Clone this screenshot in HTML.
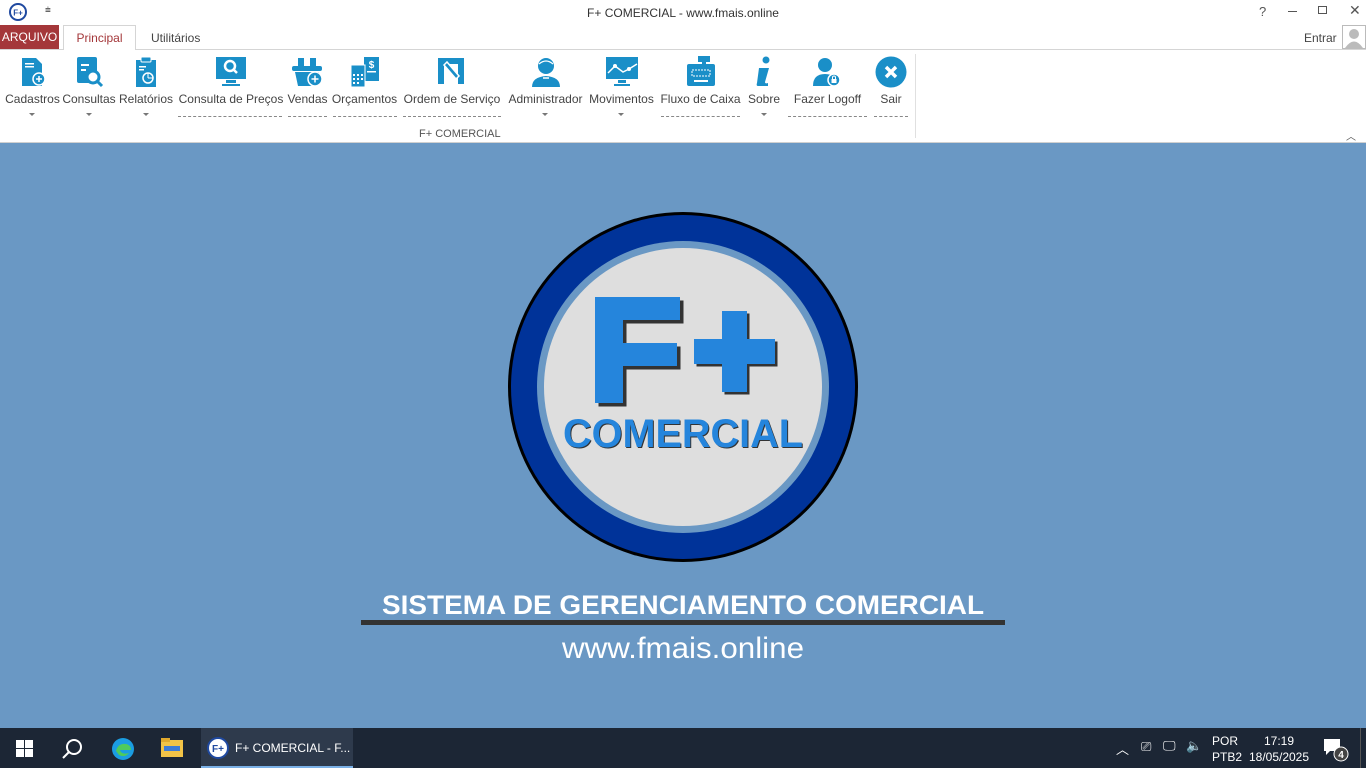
<!DOCTYPE html>
<html><head><meta charset="utf-8"><style>
*{margin:0;padding:0;box-sizing:border-box}
body{width:1366px;height:768px;overflow:hidden;font-family:"Liberation Sans",sans-serif;background:#6a98c4;position:relative;font-size:12px;color:#444}
.abs{position:absolute}
#top{left:0;top:0;width:1366px;height:143px;background:#fff;border-bottom:1px solid #d0d0d0}
.btn{position:absolute;top:56px;text-align:center;font-size:12px;color:#444;white-space:nowrap}
.btn .lbl{position:absolute;top:36px;left:-4px;right:-4px}
.dash{position:absolute;top:116px;height:1px;border-top:1px dashed #888}
.arr{position:absolute;top:113px;width:0;height:0;border-left:3px solid transparent;border-right:3px solid transparent;border-top:3px solid #777}
#task{left:0;top:728px;width:1366px;height:40px;background:#1c2635}
</style></head><body>
<div id="top" class="abs">
  <svg class="abs" style="left:9px;top:3px" width="18" height="18"><circle cx="9" cy="9" r="8" fill="#fff" stroke="#1f49a0" stroke-width="2"/><text x="9" y="12.5" font-size="8" font-weight="bold" fill="#1f49a0" text-anchor="middle" font-family="Liberation Sans">F+</text></svg>
  <div class="abs" style="left:45px;top:5px;font-size:10px;color:#666">⩧</div>
  <div class="abs" style="left:0;top:6px;width:1366px;text-align:center;font-size:12px;color:#333">F+ COMERCIAL - www.fmais.online</div>
  <div class="abs" style="left:1259px;top:4px;font-size:13px;color:#555">?</div>
  <div class="abs" style="left:1288px;top:11px;width:9px;height:1px;background:#555"></div>
  <div class="abs" style="left:1318px;top:6px;width:9px;height:8px;border:1px solid #555"></div>
  <div class="abs" style="left:1349px;top:2px;font-size:14px;color:#555">✕</div>
  <div class="abs" style="left:0;top:49px;width:1366px;height:1px;background:#d5d5d5"></div>
  <div class="abs" style="left:0;top:25px;width:59px;height:24px;background:#a4373a;color:#fff;font-size:12px;line-height:24px;text-align:center">ARQUIVO</div>
  <div class="abs" style="left:63px;top:25px;width:73px;height:25px;background:#fff;border:1px solid #d5d5d5;border-bottom:none;color:#a4373a;text-align:center;line-height:24px">Principal</div>
  <div class="abs" style="left:151px;top:31px;color:#444">Utilitários</div>
  <div class="abs" style="left:1304px;top:31px;color:#444">Entrar</div>
  <svg class="abs" style="left:1342px;top:25px" width="24" height="24"><rect width="24" height="24" fill="#bbb"/><rect x="1" y="1" width="22" height="22" fill="#fff"/><circle cx="12" cy="9" r="5" fill="#bbb"/><path d="M3 23 Q12 10 21 23Z" fill="#bbb"/></svg>

  <div class="btn" style="left:6px;width:53px"><svg width="30" height="32" viewBox="0 0 30 32"><path d="M4 2h14l6 6v22H4z" fill="#1a8fc8"/><rect x="7" y="7" width="9" height="1.5" fill="#fff"/><rect x="7" y="10" width="9" height="1.5" fill="#fff"/><circle cx="21" cy="23" r="6" fill="#1a8fc8" stroke="#fff" stroke-width="1.5"/><path d="M21 20v6M18 23h6" stroke="#fff" stroke-width="1.5"/></svg><div class="lbl">Cadastros</div></div>
  <div class="btn" style="left:62px;width:54px"><svg width="32" height="32"><rect x="4" y="1" width="20" height="26" rx="2" fill="#1a8fc8"/><rect x="8" y="8" width="8" height="2" fill="#fff"/><rect x="8" y="13" width="5" height="2" fill="#fff"/><circle cx="20" cy="21" r="6" fill="#fff" stroke="#1a8fc8" stroke-width="3"/><path d="M24 25l5 5" stroke="#1a8fc8" stroke-width="3"/></svg><div class="lbl">Consultas</div></div>
  <div class="btn" style="left:119px;width:54px"><svg width="30" height="32"><rect x="5" y="4" width="20" height="27" fill="#1a8fc8"/><rect x="10" y="1" width="10" height="5" rx="1" fill="#1a8fc8" stroke="#fff"/><rect x="8" y="10" width="7" height="1.5" fill="#fff"/><rect x="8" y="13" width="5" height="1.5" fill="#fff"/><circle cx="17" cy="22" r="5" fill="none" stroke="#fff" stroke-width="1.5"/><path d="M17 22h5M17 22v-5" stroke="#fff"/></svg><div class="lbl">Relatórios</div></div>
  <div class="btn" style="left:179px;width:104px"><svg width="34" height="32"><rect x="2" y="1" width="30" height="22" fill="#1a8fc8"/><circle cx="16" cy="10" r="5" fill="none" stroke="#fff" stroke-width="2.5"/><path d="M19 13l4 4" stroke="#fff" stroke-width="2.5"/><rect x="12" y="24" width="10" height="3" fill="#1a8fc8"/><rect x="8" y="28" width="18" height="2" fill="#1a8fc8"/></svg><div class="lbl">Consulta de Preços</div></div>
  <div class="btn" style="left:287px;width:41px"><svg width="36" height="32"><path d="M8 2h6v8H8zM20 2h6v8h-6z" fill="#1a8fc8"/><rect x="2" y="10" width="30" height="5" rx="2" fill="#1a8fc8"/><path d="M5 16h24l-3 14H8z" fill="#1a8fc8"/><circle cx="25" cy="23" r="7" fill="#1a8fc8" stroke="#fff" stroke-width="1.5"/><path d="M25 19.5v7M21.5 23h7" stroke="#fff" stroke-width="1.5"/></svg><div class="lbl">Vendas</div></div>
  <div class="btn" style="left:331px;width:67px"><svg width="34" height="32"><rect x="16" y="1" width="15" height="24" fill="#1a8fc8"/><text x="23.5" y="12" font-size="10" fill="#fff" text-anchor="middle" font-weight="bold" font-family="Liberation Sans">$</text><rect x="19" y="15" width="9" height="1.5" fill="#fff"/><rect x="3" y="9" width="14" height="22" fill="#1a8fc8" stroke="#fff"/><g fill="#fff"><rect x="5" y="18" width="2" height="2"/><rect x="9" y="18" width="2" height="2"/><rect x="13" y="18" width="2" height="2"/><rect x="5" y="22" width="2" height="2"/><rect x="9" y="22" width="2" height="2"/><rect x="13" y="22" width="2" height="2"/><rect x="5" y="26" width="2" height="2"/><rect x="9" y="26" width="2" height="2"/></g></svg><div class="lbl">Orçamentos</div></div>
  <div class="btn" style="left:403px;width:98px"><svg width="34" height="32"><path d="M3 2h26v26h-6V8H9v20H3z" fill="#1a8fc8"/><path d="M12 6l12 14-3 3L9 9z" fill="#1a8fc8" stroke="#fff" stroke-width="1.5"/></svg><div class="lbl">Ordem de Serviço</div></div>
  <div class="btn" style="left:506px;width:79px"><svg width="32" height="32"><circle cx="16" cy="10" r="8" fill="#1a8fc8"/><path d="M9 8q7-6 14 0" stroke="#fff" stroke-width="1.2" fill="none"/><path d="M2 31q0-10 14-11 14 1 14 11z" fill="#1a8fc8"/><path d="M13 22h6" stroke="#fff" stroke-width="1.5"/></svg><div class="lbl">Administrador</div></div>
  <div class="btn" style="left:587px;width:69px"><svg width="34" height="32"><rect x="1" y="1" width="32" height="22" fill="#1a8fc8"/><path d="M3 17l7-7 8 6 6-3 8-5" stroke="#fff" stroke-width="1.5" fill="none"/><circle cx="10" cy="10" r="2" fill="#fff"/><circle cx="24" cy="13" r="2" fill="#fff"/><rect x="13" y="24" width="8" height="3" fill="#1a8fc8"/><rect x="9" y="28" width="16" height="2" fill="#1a8fc8"/></svg><div class="lbl">Movimentos</div></div>
  <div class="btn" style="left:660px;width:81px"><svg width="34" height="32"><rect x="14" y="0" width="12" height="6" fill="#1a8fc8"/><rect x="18" y="6" width="4" height="4" fill="#1a8fc8"/><rect x="3" y="8" width="28" height="22" rx="2" fill="#1a8fc8"/><g fill="#fff"><rect x="8" y="14" width="18" height="6" fill="none" stroke="#fff" stroke-dasharray="2 1"/><rect x="10" y="24" width="14" height="2"/></g></svg><div class="lbl">Fluxo de Caixa</div></div>
  <div class="btn" style="left:747px;width:34px"><svg width="24" height="32"><circle cx="14" cy="4" r="3.5" fill="#1a8fc8"/><path d="M7 12h10l-4 14q0 2 3 1v3H6q-2 0 -1-3z" fill="#1a8fc8"/></svg><div class="lbl">Sobre</div></div>
  <div class="btn" style="left:788px;width:79px"><svg width="32" height="32"><circle cx="13" cy="9" r="7" fill="#1a8fc8"/><path d="M1 30q0-12 12-12 12 0 12 12z" fill="#1a8fc8"/><circle cx="22" cy="24" r="6" fill="#1a8fc8" stroke="#fff" stroke-width="1.5"/><rect x="19.5" y="23" width="5" height="4" fill="#fff"/><path d="M20.5 23v-1.5a1.5 1.5 0 0 1 3 0V23" stroke="#fff" fill="none"/></svg><div class="lbl">Fazer Logoff</div></div>
  <div class="btn" style="left:874px;width:34px"><svg width="34" height="32"><circle cx="17" cy="16" r="15.5" fill="#1a8fc8"/><path d="M12 11l10 10M22 11l-10 10" stroke="#fff" stroke-width="3.5"/></svg><div class="lbl">Sair</div></div>

  <div class="arr" style="left:29px"></div><div class="arr" style="left:86px"></div><div class="arr" style="left:143px"></div><div class="arr" style="left:542px"></div><div class="arr" style="left:618px"></div><div class="arr" style="left:761px"></div>
  <div class="dash" style="left:178px;width:104px"></div>
  <div class="dash" style="left:288px;width:39px"></div>
  <div class="dash" style="left:333px;width:64px"></div>
  <div class="dash" style="left:403px;width:98px"></div>
  <div class="dash" style="left:661px;width:79px"></div>
  <div class="dash" style="left:788px;width:79px"></div>
  <div class="dash" style="left:874px;width:34px"></div>
  <div class="abs" style="left:419px;top:128px;font-size:11px;color:#555">F+ COMERCIAL</div>
  <div class="abs" style="left:915px;top:54px;width:1px;height:84px;background:#e0e0e0"></div>
  <div class="abs" style="left:1346px;top:128px;font-size:10px;color:#555">︿</div>
</div>

<svg class="abs" style="left:506px;top:211px" width="354" height="354" viewBox="0 0 354 354">
  <circle cx="177" cy="176" r="175" fill="#000"/>
  <circle cx="177" cy="176" r="172" fill="#003399"/>
  <circle cx="177" cy="176" r="146" fill="#6a98c4"/>
  <circle cx="177" cy="176" r="139" fill="#dedede"/>
  <path d="M91 88h85v23h-57v23h54v23h-54v37h-28z" fill="#333" transform="translate(1.5,1.5)"/>
  <path d="M89 86h85v23h-57v23h54v23h-54v37h-28z" fill="#2585dc"/>
  <path d="M217 101h25v28h28v25h-28v28h-25v-28h-28v-25h28z" fill="#333" transform="translate(1.5,1.5)"/>
  <path d="M216 100h25v28h28v25h-28v28h-25v-28h-28v-25h28z" fill="#2585dc"/>
  <text x="178" y="237" font-family="Liberation Sans" font-weight="bold" font-size="40" fill="#333" text-anchor="middle" textLength="240" lengthAdjust="spacingAndGlyphs">COMERCIAL</text>
  <text x="177" y="236" font-family="Liberation Sans" font-weight="bold" font-size="40" fill="#2585dc" text-anchor="middle" textLength="240" lengthAdjust="spacingAndGlyphs">COMERCIAL</text>
</svg>
<svg class="abs" style="left:361px;top:585px" width="644" height="80">
  <text x="322" y="29" font-family="Liberation Sans" font-weight="bold" font-size="27" fill="#fff" text-anchor="middle" textLength="602" lengthAdjust="spacingAndGlyphs">SISTEMA DE GERENCIAMENTO COMERCIAL</text>
  <rect x="0" y="35" width="644" height="5" fill="#333"/>
  <text x="322" y="73" font-family="Liberation Sans" font-size="30" fill="#fff" text-anchor="middle" textLength="242" lengthAdjust="spacingAndGlyphs">www.fmais.online</text>
</svg>

<div id="task" class="abs">
  <svg class="abs" style="left:16px;top:12px" width="17" height="17"><g fill="#fff"><rect width="8" height="8"/><rect x="9" width="8" height="8"/><rect y="9" width="8" height="8"/><rect x="9" y="9" width="8" height="8"/></g></svg>
  <svg class="abs" style="left:61px;top:9px" width="24" height="24"><circle cx="13" cy="10" r="7" fill="none" stroke="#fff" stroke-width="2"/><path d="M8 15l-6 6" stroke="#fff" stroke-width="2"/></svg>
  <svg class="abs" style="left:111px;top:9px" width="24" height="24"><circle cx="12" cy="12" r="11" fill="#1b9de2"/><path d="M5 14q2-8 10-7 5 1 5 6H9q1 5 9 3-4 5-10 2" fill="#4ecb5c"/></svg>
  <svg class="abs" style="left:161px;top:10px" width="22" height="20"><rect y="2" width="22" height="17" fill="#f2c347"/><rect y="0" width="9" height="4" fill="#e0a92d"/><rect x="3" y="8" width="16" height="5" fill="#3d7bd6"/></svg>
  <div class="abs" style="left:201px;top:0;width:152px;height:40px;background:#2e3a4c;border-bottom:2px solid #7ab0e6"></div>
  <svg class="abs" style="left:207px;top:9px" width="22" height="22"><circle cx="11" cy="11" r="10" fill="#fff" stroke="#1f49a0" stroke-width="2"/><text x="11" y="15" font-size="10" font-weight="bold" fill="#1f49a0" text-anchor="middle" font-family="Liberation Sans">F+</text></svg>
  <div class="abs" style="left:235px;top:13px;color:#fff;font-size:12px">F+ COMERCIAL - F...</div>
  <div class="abs" style="left:1116px;top:11px;color:#fff;font-size:13px">︿</div>
  <div class="abs" style="left:1141px;top:11px;color:#fff;font-size:13px">⎚</div>
  <div class="abs" style="left:1163px;top:10px;color:#fff;font-size:13px">🖵</div>
  <div class="abs" style="left:1186px;top:10px;color:#fff;font-size:13px">🔈</div>
  <div class="abs" style="left:1212px;top:5px;color:#fff;font-size:12px;line-height:16px">POR<br>PTB2</div>
  <div class="abs" style="left:1247px;top:5px;width:64px;color:#fff;font-size:12px;line-height:16px;text-align:center">17:19<br>18/05/2025</div>
  <svg class="abs" style="left:1322px;top:9px" width="28" height="26"><path d="M2 2h16v12h-10l-4 4v-4h-2z" fill="#fff"/><circle cx="19" cy="17" r="7" fill="#444" stroke="#fff"/><text x="19" y="21" font-size="10" fill="#fff" text-anchor="middle" font-family="Liberation Sans" font-weight="bold">4</text></svg>
  <div class="abs" style="left:1360px;top:0;width:1px;height:40px;background:#555"></div>
</div>
</body></html>
